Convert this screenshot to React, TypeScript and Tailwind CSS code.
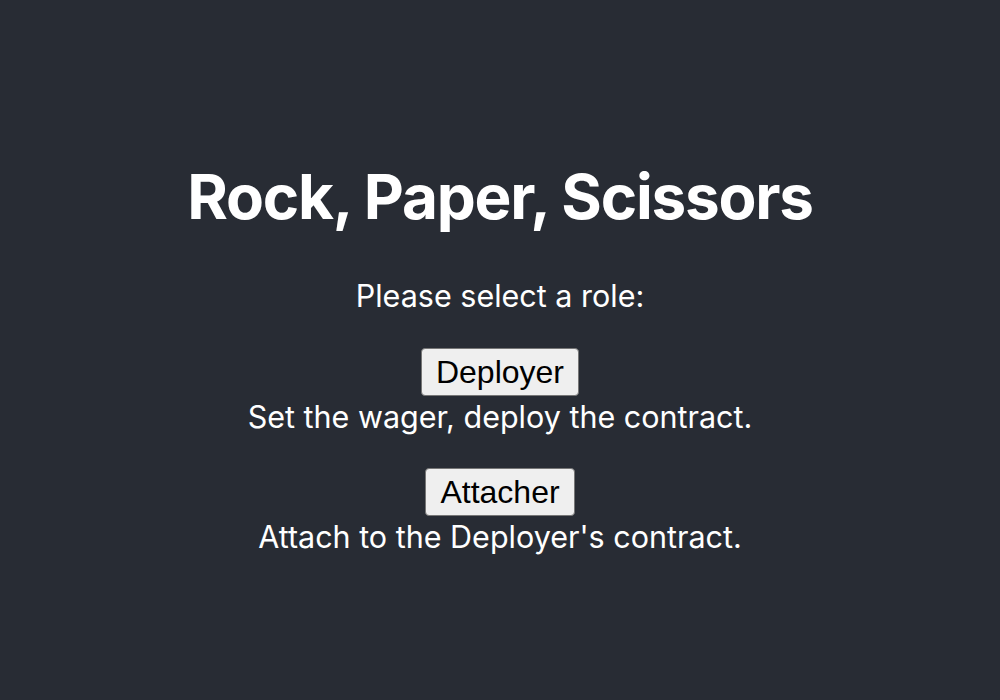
export default function App() {
  return (
    <div className="min-h-screen bg-[#282c34] text-white text-center font-['Inter',sans-serif]">
      <div className="flex flex-col items-center pt-[166px]">
        <h1 className="text-[62px] leading-none font-bold tracking-[-0.02em]">
          Rock, Paper, Scissors
        </h1>
        <p className="mt-[53px] text-[30.5px] leading-none">Please select a role:</p>
        <div className="mt-[36px] flex flex-col items-center">
          <button className="h-[48px] px-[14px] rounded-[4px] border border-[#767676] bg-[#efefef] text-black text-[32px] leading-none font-['Liberation_Sans',Arial,sans-serif]">
            Deployer
          </button>
          <p className="mt-[6px] text-[30.5px] leading-none">Set the wager, deploy the contract.</p>
        </div>
        <div className="mt-[36px] flex flex-col items-center">
          <button className="h-[48px] px-[14px] rounded-[4px] border border-[#767676] bg-[#efefef] text-black text-[32px] leading-none font-['Liberation_Sans',Arial,sans-serif]">
            Attacher
          </button>
          <p className="mt-[6px] text-[30.5px] leading-none">Attach to the Deployer's contract.</p>
        </div>
      </div>
    </div>
  );
}
